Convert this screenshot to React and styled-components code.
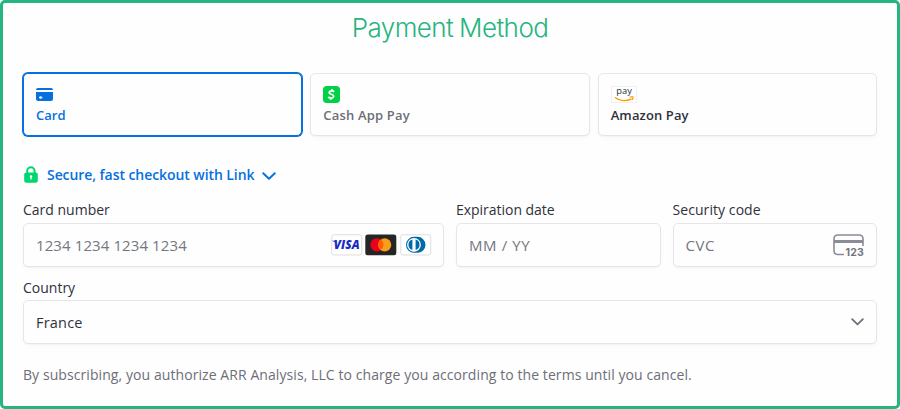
import React from "react";
import styled, { createGlobalStyle } from "styled-components";

const GlobalStyle = createGlobalStyle`
  * { box-sizing: border-box; }
  body { margin: 0; background: #fff; }
  svg { flex: none; overflow: visible; }
`;

const Frame = styled.main`
  width: 900px;
  height: 409px;
  padding: 0 20px;
  border: 3px solid #26b480;
  border-radius: 5px;
  background: #fefefe;
  color: #30313d;
  font-family: "Open Sans", "Noto Sans", sans-serif;
`;

const Title = styled.h1`
  margin: 0;
  height: 70px;
  padding-top: 9px;
  text-align: center;
  font: 300 26px/32px Inter, sans-serif;
  letter-spacing: ${(p) => p.$spacing}px;
  word-spacing: -1px;
  color: #26b480;
`;

const Tabs = styled.div`
  display: grid;
  grid-template-columns: repeat(3, 1fr);
  gap: 8px;
`;

const Tab = styled.button`
  height: 63px;
  padding: 11px 12px 0;
  display: flex;
  flex-direction: column;
  align-items: flex-start;
  border: 1px solid ${(p) => (p.$selected ? "#0570de" : "#e6e6e6")};
  border-radius: 5px;
  background: #fefefe;
  box-shadow: ${(p) =>
    p.$selected
      ? "0 0 0 1px #0570de, 0 1px 1px rgba(0,0,0,.03), 0 3px 6px rgba(0,0,0,.02)"
      : "0 1px 1px rgba(0,0,0,.03), 0 3px 6px rgba(0,0,0,.02)"};
  color: ${(p) => p.$color};
  font: 600 13px/20px "Open Sans", "Noto Sans", sans-serif;
  letter-spacing: ${(p) => p.$spacing || 0}px;
`;

const TabIcon = styled.span`
  height: 19px;
  margin-bottom: 1px;
  display: flex;
  align-items: center;
`;

const LinkRow = styled.div`
  height: 20px;
  margin-top: 29px;
  display: flex;
  align-items: center;
  color: #0570de;
  font-size: 14px;
  font-weight: 600;
  line-height: 20px;
  letter-spacing: ${(p) => p.$spacing}px;
`;

const LinkText = styled.span`
  margin: 0 8px 0 9px;
`;

const LinkArrow = styled.span`
  display: flex;
  padding-top: 2px;
`;

const Fields = styled.div`
  display: grid;
  grid-template-columns: repeat(4, 1fr);
  column-gap: 12px;
  margin-top: 15px;
`;

const Field = styled.div`
  grid-column: span ${(p) => p.$span};
  min-width: 0;
`;

const Label = styled.div`
  height: 23px;
  font-size: 14px;
  line-height: 20px;
  letter-spacing: ${(p) => p.$spacing || 0}px;
`;

const Control = styled.div`
  height: 44px;
  padding: 0 12px;
  display: flex;
  align-items: center;
  justify-content: space-between;
  border: 1px solid #e6e6e6;
  border-radius: 5px;
  background: #fefefe;
  box-shadow: 0 1px 1px rgba(0, 0, 0, 0.03), 0 3px 6px rgba(0, 0, 0, 0.02);
  color: ${(p) => (p.$filled ? "#30313d" : "#757680")};
  font-size: ${(p) => (p.$filled ? 14.5 : 15)}px;
  letter-spacing: ${(p) => p.$spacing || 0}px;
`;

const Brands = styled.div`
  display: flex;
  gap: 3px;
`;

const Country = styled.div`
  margin-top: 11px;
`;

const CountryLabel = styled(Label)`
  height: 22px;
`;

const Terms = styled.p`
  margin: 21px 0 0;
  color: #6d6e78;
  font-size: 14px;
  line-height: 20px;
  white-space: nowrap;
  letter-spacing: ${(p) => p.$spacing}px;
`;

const CardIcon = () => (
  <svg width="17" height="13" viewBox="0 0 17 13">
    <path d="M0 2V1.8Q0 0 2 0H15Q17 0 17 1.8V2Z" fill="#0570de" />
    <path d="M0 4H17V11Q17 13 15 13H2Q0 13 0 11Z" fill="#0570de" />
    <path d="M3 9.5H6.3M4.6 8.2V10.8" stroke="#fff" strokeWidth="1.3" />
  </svg>
);

const CashIcon = () => (
  <svg width="17" height="17" viewBox="0 0 17 17">
    <rect width="17" height="17" rx="3.8" fill="#00d146" />
    <path
      d="M11.2 5.8C9.8 4.6 6.3 4.4 6.2 6.5C6.1 8.6 10.8 7.9 10.7 10.3C10.6 12.5 7.1 12.6 5.2 11M9.2 3.1L8.9 4.8M7.9 12L7.5 13.8"
      fill="none" stroke="#fff" strokeWidth="1.8"
    />
  </svg>
);

const AmazonIcon = () => (
  <svg width="26" height="17" viewBox="0 0 26 17">
    <rect x=".5" y=".5" width="25" height="16" fill="#fff" stroke="#f1f1f1" />
    <text x="5.3" y="8.2" fontFamily="Open Sans, sans-serif" fontSize="9.5" fontWeight="500" textLength="15.5" lengthAdjust="spacingAndGlyphs" letterSpacing="0" fill="#232f3e">pay</text>
    <path d="M4 11.5C9 15.4 16 15.4 20.5 12.8" fill="none" stroke="#ff9900" strokeWidth="1.4" />
    <path d="M18.7 11.2Q22.8 9.9 22.1 11.8L21.2 14" fill="none" stroke="#ff9900" strokeWidth="1.1" />
  </svg>
);

const LockIcon = () => (
  <svg width="15" height="18" viewBox="0 0 15 18">
    <path d="M4.2 8V5a3.7 3.7 0 0 1 7.4 0V8" fill="none" stroke="#00d66f" strokeWidth="2" />
    <rect x="1.2" y="6.5" width="13.6" height="10.3" rx="2" fill="#00d66f" />
    <circle cx="8" cy="10.4" r="1.2" fill="#fff" />
    <path d="M8 10.4V13.6" stroke="#fff" strokeWidth="1.3" />
  </svg>
);

const Chevron = ({ color, width = 14 }) => (
  <svg width={width} height={(width * 8) / 14} viewBox="0 0 14 8">
    <path d="M1.2 1.2L7 6.8L12.8 1.2" fill="none" stroke={color} strokeWidth="1.9" strokeLinecap="round" strokeLinejoin="round" />
  </svg>
);

const VisaIcon = () => (
  <svg width="31.5" height="22" viewBox="0 0 31.5 22">
    <rect x=".75" y=".75" width="30" height="20.2" rx="2.2" fill="#fff" stroke="#dedede" />
    <text x="2.8" y="15.2" fontFamily="Open Sans, sans-serif" fontSize="11.8" fontWeight="800" fontStyle="italic" textLength="26" lengthAdjust="spacingAndGlyphs" fill="#1a2bc3">VISA</text>
    <path d="M1.2 6.8H4.5L5.8 9.5Q4 7.6 1.2 7Z" fill="#1a2bc3" />
  </svg>
);

const MastercardIcon = () => (
  <svg width="31.5" height="22" viewBox="0 0 31.5 22">
    <rect x=".3" y=".4" width="31" height="20.8" rx="2.5" fill="#252525" />
    <circle cx="11.9" cy="10.8" r="6.6" fill="#eb001b" />
    <circle cx="19.7" cy="10.8" r="6.6" fill="#f79e1b" />
    <path d="M15.8 5.5a6.6 6.6 0 0 1 0 10.6a6.6 6.6 0 0 1 0-10.6" fill="#ff5f00" />
  </svg>
);

const DinersIcon = () => (
  <svg width="31.5" height="22" viewBox="0 0 31.5 22">
    <rect x=".75" y=".75" width="30" height="20.2" rx="2.2" fill="#fff" stroke="#dedede" />
    <path d="M14 2.8H17.5A8 8 0 0 1 17.5 18.8H14A8 8 0 0 1 14 2.8Z" fill="#0069aa" />
    <circle cx="14" cy="10.8" r="6.9" fill="#fff" />
    <path d="M12.4 5.6A5.4 5.4 0 0 0 12.4 16ZM15.6 5.6A5.4 5.4 0 0 1 15.6 16Z" fill="#0069aa" />
  </svg>
);

const CvcIcon = () => (
  <svg width="31" height="22" viewBox="0 0 31 22">
    <path d="M30 12V5Q30 1 26 1H5Q1 1 1 5V16.5Q1 20.5 5 20.5H11" fill="none" stroke="#8b8c95" strokeWidth="1.6" />
    <path d="M1 7.5H30" stroke="#8b8c95" strokeWidth="3" />
    <text x="12.5" y="21.5" fontFamily="Inter, sans-serif" fontSize="10.5" fontWeight="700" letterSpacing="0" textLength="18.3" fill="#73747e">123</text>
  </svg>
);

export default function App() {
  return (
    <>
      <GlobalStyle />
      <Frame>
        <Title $spacing={-0.55}>Payment Method</Title>
        <Tabs>
          <Tab $selected $color="#0570de">
            <TabIcon><CardIcon /></TabIcon>Card
          </Tab>
          <Tab $color="#6d6e78" $spacing={0.17}>
            <TabIcon><CashIcon /></TabIcon>Cash App Pay
          </Tab>
          <Tab $color="#30313d" $spacing={0.12}>
            <TabIcon><AmazonIcon /></TabIcon>Amazon Pay
          </Tab>
        </Tabs>
        <LinkRow $spacing={-0.07}>
          <LockIcon />
          <LinkText>Secure, fast checkout with Link</LinkText>
          <LinkArrow><Chevron color="#0570de" /></LinkArrow>
        </LinkRow>
        <Fields>
          <Field $span={2}>
            <Label>Card number</Label>
            <Control $spacing={0.1}>
              <span>1234 1234 1234 1234</span>
              <Brands><VisaIcon /><MastercardIcon /><DinersIcon /></Brands>
            </Control>
          </Field>
          <Field $span={1}>
            <Label $spacing={-0.03}>Expiration date</Label>
            <Control $spacing={0.6}>MM / YY</Control>
          </Field>
          <Field $span={1}>
            <Label $spacing={0.07}>Security code</Label>
            <Control $spacing={0.6}>CVC<CvcIcon /></Control>
          </Field>
        </Fields>
        <Country>
          <CountryLabel>Country</CountryLabel>
          <Control $filled $spacing={0.2}>France<Chevron color="#6d6e78" width={13} /></Control>
        </Country>
        <Terms $spacing={0.077}>
          By subscribing, you authorize ARR Analysis, LLC to charge you according to the terms until you cancel.
        </Terms>
      </Frame>
    </>
  );
}
